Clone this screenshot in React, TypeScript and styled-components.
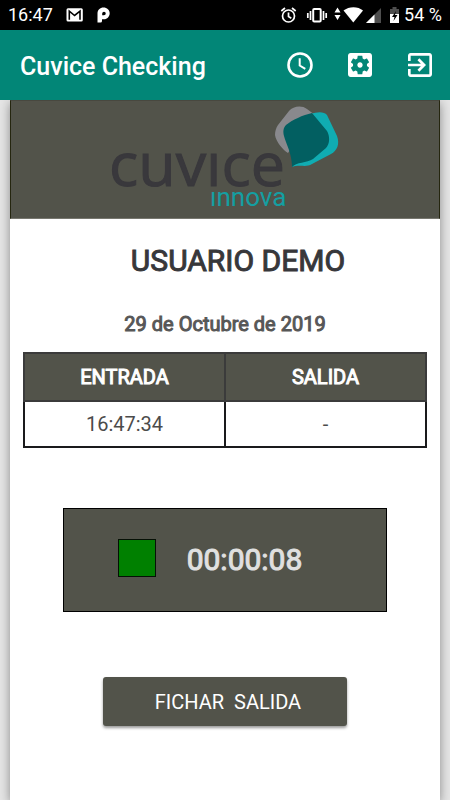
import React from "react";
import styled, { createGlobalStyle } from "styled-components";

const olive = "#52534a";

const GlobalStyle = createGlobalStyle`
  *, *::before, *::after { box-sizing: border-box; }
  body {
    margin: 0;
    background: #e5e5e5;
    font-family: Roboto, sans-serif;
    color: #333;
  }
`;

const Screen = styled.div`
  display: flex;
  flex-direction: column;
  min-height: 100vh;
`;

const StatusBar = styled.div`
  display: flex;
  align-items: center;
  justify-content: space-between;
  height: 30px;
  padding: 0 8px;
  background: #000;
  color: #fff;
  font-size: 18px;
  line-height: 30px;
`;

const StatusGroup = styled.div<{ $gap: number }>`
  display: flex;
  align-items: center;
  gap: ${({ $gap }) => $gap}px;
`;

const AppBar = styled.header`
  display: flex;
  align-items: center;
  justify-content: space-between;
  height: 70px;
  padding: 0 14px 0 20px;
  background: #028677;
  color: #fff;
`;

const AppTitle = styled.h1`
  margin: 0;
  padding-top: 4px;
  font-size: 25px;
  font-weight: 500;
  line-height: 32px;
`;

const Actions = styled.nav`
  display: flex;
  gap: 28px;
`;

const IconButton = styled.button`
  display: flex;
  padding: 0;
  border: 0;
  background: none;
  color: inherit;
  cursor: pointer;
`;

const Card = styled.main`
  display: flex;
  flex: 1;
  flex-direction: column;
  align-items: center;
  margin: 0 10px;
  background: #fff;
  box-shadow: 0 3px 10px rgba(0, 0, 0, 0.4);
  clip-path: inset(0 -10px);
`;

const Banner = styled.div`
  display: flex;
  justify-content: center;
  align-self: stretch;
  height: 119px;
  background: ${olive};
  border: 1px solid #25260f;
  border-top-color: #48483f;
  border-bottom-color: #77776f;
`;

const UserName = styled.h2`
  margin: 22px 0 0;
  padding-left: 26px;
  font-size: 30px;
  font-weight: 400;
  line-height: 40px;
  color: #37373a;
  -webkit-text-stroke: 1px #37373a;
`;

const DateLine = styled.p`
  margin: 31px 0 16px;
  font-size: 20px;
  font-weight: 400;
  line-height: 24px;
  color: #575757;
  -webkit-text-stroke: 1px #575757;
`;

const Times = styled.table`
  width: calc(100% - 26px);
  table-layout: fixed;
  border-collapse: collapse;
  border: 2px solid #222326;
  text-align: center;
  font-size: 20px;
  line-height: 24px;
`;

const HeadCell = styled.th`
  height: 48px;
  padding: 0;
  border: 2px solid #3b3b3b;
  background: ${olive};
  color: #fff;
  font-weight: 400;
  -webkit-text-stroke: 1px #fff;
`;

const Cell = styled.td`
  height: 46px;
  padding: 0;
  border: 2px solid #1a1a1c;
  color: #4b4b4b;
`;

const Timer = styled.section`
  display: flex;
  align-items: center;
  justify-content: center;
  gap: 31px;
  width: calc(100% - 106px);
  height: 104px;
  margin-top: 60px;
  padding-right: 30px;
  background: ${olive};
  border: 1px solid #000;
`;

const StateLight = styled.span`
  width: 38px;
  height: 38px;
  margin-bottom: 4px;
  background: #008000;
  border: 1px solid #061006;
`;

const Elapsed = styled.time`
  font-size: 30px;
  font-weight: 400;
  line-height: 40px;
  color: #e0e0e0;
  -webkit-text-stroke: 1px #e0e0e0;
`;

const PunchButton = styled.button`
  width: 244px;
  height: 49px;
  margin: 65px 0 74px;
  padding: 0 0 0 6px;
  border: 0;
  border-radius: 3px;
  background: ${olive};
  box-shadow: 0 2px 3px rgba(0, 0, 0, 0.4);
  color: #fff;
  font-family: inherit;
  font-size: 20px;
  white-space: pre;
  cursor: pointer;
`;

const GmailIcon = () => (
  <svg width="18" height="16" viewBox="0 0 18 16" aria-hidden="true">
    <rect x="0.500" y="1.200" width="16.300" height="13.300" rx="1.500" fill="#fff" />
    <path d="M3.300 12.700V4.200l5.300 4.300L14 4.200v8.500" fill="none" stroke="#000" strokeWidth="1.600" />
  </svg>
);

const ParkingIcon = () => (
  <svg width="14" height="16" viewBox="0 0 14 16" aria-hidden="true">
    <path
      fillRule="evenodd"
      fill="#fff"
      d="M0.500 15.500V6.500C0.500 3 3 .500 6.500 .500S12.700 3 12.700 6.300 10.200 12.300 7 12.300H5v1.700A1.500 1.500 0 0 1 3.500 15.500ZM7 4.700A1.900 1.900 0 0 0 5.200 6.500V8.200H7A1.750 1.750 0 0 0 7 4.700Z"
    />
  </svg>
);

const StatusIcons = () => (
  <svg width="121" height="20" viewBox="280 5 121 20" aria-hidden="true">
    <g fill="none" stroke="#fff" strokeWidth="1.700">
      <circle cx="288.500" cy="16" r="6" />
      <path d="M288.500 12.500v4l2.800 1.700M281.300 11l3.700-3M295.700 11l-3.700-3" />
      <rect x="313.200" y="9" width="7.500" height="12.500" rx="1" strokeWidth="2" />
      <path d="M310.500 11v9M307.800 13v5M323.500 11v9M326.200 13v5" />
    </g>
    <g fill="#fff">
      <path d="M337.500 7.500l3 5h-6zM337.500 20l3-5h-6z" />
      <path d="M343.500 10.500C349 6 358 6 363 10.500L353.300 22.500Z" />
    </g>
    <path d="M381 8v15h-15z" fill="#4e4e4e" />
    <path d="M374.500 14.500V23H366z" fill="#fff" />
    <path d="M390 9h2.500V7h4v2h2.500v5h-9z" fill="#4e4e4e" />
    <path d="M390 14h9v9h-9z" fill="#fff" />
    <path d="M396 11l-4 6h2.500l-1 4 4-6H395z" fill="#000" />
  </svg>
);

const ClockIcon = () => (
  <svg width="32" height="32" viewBox="0 0 32 32" fill="none" stroke="#fff" aria-hidden="true">
    <circle cx="16" cy="16" r="11.500" strokeWidth="2.600" />
    <path d="M15.700 9.300v7.200l5.600 3.300" strokeWidth="2" />
  </svg>
);

const SettingsIcon = () => (
  <svg width="32" height="32" viewBox="0 0 24 24" fill="#fff" aria-hidden="true">
    <path d="M12 10c-1.100 0-2 .9-2 2s.9 2 2 2 2-.9 2-2-.9-2-2-2zm7-7H5c-1.110 0-2 .9-2 2v14c0 1.100.89 2 2 2h14c1.110 0 2-.9 2-2V5c0-1.100-.89-2-2-2zm-1.750 9c0 .23-.02.46-.05.68l1.480 1.160c.13.11.17.3.08.45l-1.400 2.420c-.09.15-.27.21-.43.15l-1.740-.7c-.36.28-.76.51-1.180.69l-.26 1.850c-.03.17-.18.3-.35.3h-2.800c-.17 0-.32-.13-.35-.29l-.26-1.850c-.43-.18-.82-.41-1.180-.69l-1.740.7c-.16.06-.34 0-.43-.15l-1.400-2.420c-.09-.15-.05-.34.08-.45l1.480-1.160c-.03-.23-.05-.46-.05-.69 0-.23.02-.46.05-.68l-1.480-1.160c-.13-.11-.17-.3-.08-.45l1.400-2.420c.09-.15.27-.21.43-.15l1.740.7c.36-.28.76-.51 1.180-.69l.26-1.850c.03-.17.18-.3.35-.3h2.800c.17 0 .32.13.35.29l.26 1.850c.43.18.82.41 1.180.69l1.740-.7c.16-.06.34 0 .43.15l1.400 2.420c.09.15.05.34-.08.45l-1.480 1.160c.03.23.05.46.05.69z" />
  </svg>
);

const ExitIcon = () => (
  <svg width="32" height="32" viewBox="0 0 24 24" fill="#fff" aria-hidden="true">
    <path d="M10.090 15.590L11.500 17l5-5-5-5-1.410 1.410L12.670 11H3v2h9.670l-2.580 2.590zM19 3H5c-1.110 0-2 .9-2 2v4h2V5h14v14H5v-4H3v4c0 1.100.89 2 2 2h14c1.100 0 2-.9 2-2V5c0-1.100-.9-2-2-2z" />
  </svg>
);

const Logo = () => (
  <svg width="240" height="117" viewBox="105 101 240 117" role="img" aria-label="cuvice innova">
    <path d="M275 135C275 131 276 128 278 125L289 111C293 106 302 105 307 109L315 115L288 153C283 150 276 142 275 135Z" fill="#89898d" />
    <path d="M311 114C316 112 324 111 327 115L337 136C340 144 337 151 331 154L312 164C306 168 300 164 292 167Z" fill="#10acb2" />
    <path d="M312 113C303 115 292 120 286 125C283 128 283 132 284 136C286 144 292 153 292 167C296 162 307 163 313 159L326 148C330 144 330 136 327 131Z" fill="#025f61" />
    <text x="109" y="186" fontFamily="Open Sans" fontSize="61" fill="#39383c" stroke="#39383c" strokeWidth="1">cuvıce</text>
    <text x="210" y="206" fontFamily="Roboto" fontSize="26" fill="#149fa2">ınnova</text>
  </svg>
);

export default function App() {
  return (
    <>
      <GlobalStyle />
      <Screen>
        <StatusBar>
          <StatusGroup $gap={13}>
            <span>16:47</span>
            <GmailIcon />
            <ParkingIcon />
          </StatusGroup>
          <StatusGroup $gap={3}>
            <StatusIcons />
            <span>54 %</span>
          </StatusGroup>
        </StatusBar>
        <AppBar>
          <AppTitle>Cuvice Checking</AppTitle>
          <Actions aria-label="Acciones">
            <IconButton type="button" aria-label="Historial"><ClockIcon /></IconButton>
            <IconButton type="button" aria-label="Ajustes"><SettingsIcon /></IconButton>
            <IconButton type="button" aria-label="Salir"><ExitIcon /></IconButton>
          </Actions>
        </AppBar>
        <Card>
          <Banner><Logo /></Banner>
          <UserName>USUARIO DEMO</UserName>
          <DateLine>29 de Octubre de 2019</DateLine>
          <Times>
            <thead>
              <tr>
                <HeadCell scope="col">ENTRADA</HeadCell>
                <HeadCell scope="col">SALIDA</HeadCell>
              </tr>
            </thead>
            <tbody>
              <tr>
                <Cell>16:47:34</Cell>
                <Cell>-</Cell>
              </tr>
            </tbody>
          </Times>
          <Timer>
            <StateLight />
            <Elapsed>00:00:08</Elapsed>
          </Timer>
          <PunchButton type="button">{"FICHAR  SALIDA"}</PunchButton>
        </Card>
      </Screen>
    </>
  );
}
